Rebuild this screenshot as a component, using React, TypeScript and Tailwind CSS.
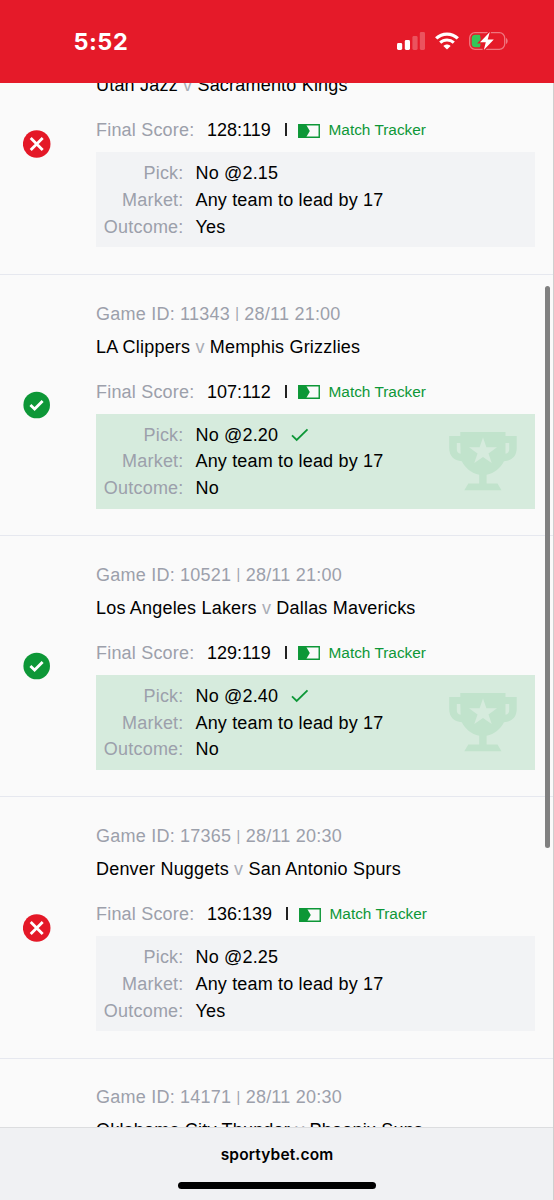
import React from 'react';

type Bet = {
  id?: string;
  time?: string;
  home: string;
  away: string;
  score?: string;
  pick?: string;
  outcome?: string;
  won: boolean;
  scoreWidth: string;
};

const bets: Bet[] = [
  { home: 'Utah Jazz', away: 'Sacramento Kings', score: '128:119', pick: 'No @2.15', outcome: 'Yes', won: false, scoreWidth: 'w-[78px]' },
  { id: '11343', time: '28/11 21:00', home: 'LA Clippers', away: 'Memphis Grizzlies', score: '107:112', pick: 'No @2.20', outcome: 'No', won: true, scoreWidth: 'w-[78px]' },
  { id: '10521', time: '28/11 21:00', home: 'Los Angeles Lakers', away: 'Dallas Mavericks', score: '129:119', pick: 'No @2.40', outcome: 'No', won: true, scoreWidth: 'w-[78px]' },
  { id: '17365', time: '28/11 20:30', home: 'Denver Nuggets', away: 'San Antonio Spurs', score: '136:139', pick: 'No @2.25', outcome: 'Yes', won: false, scoreWidth: 'w-[79px]' },
  { id: '14171', time: '28/11 20:30', home: 'Oklahoma City Thunder', away: 'Phoenix Suns', won: false, scoreWidth: 'w-[78px]' },
];

function StatusIcon({ won }: { won: boolean }) {
  return (
    <svg width="28" height="28" viewBox="0 0 28 28" fill="none">
      <circle cx="13.7" cy="14" r={won ? 13.3 : 13.8} fill={won ? '#0d9737' : '#e41827'} />
      {won ? (
        <path d="M7.4 14l4.2 4.1 8-8.2" stroke="#fff" strokeWidth="2.8" />
      ) : (
        <path d="M7.7 8l12 12M19.7 8L7.7 20" stroke="#fff" strokeWidth="2.8" />
      )}
    </svg>
  );
}

function Trophy() {
  return (
    <svg width="68" height="59" viewBox="0 0 68 59" fill="#c1e3cc">
      <path
        fillRule="evenodd"
        d="M11.3 0H56.5V4H67.7V16C67.7 24 63 28.8 55 29.2C51.5 36 45.5 41 37.6 42.8V51.5H48.5L52.5 58.3H15.3L19.3 51.5H30.2V42.8C22.3 41 16.3 36 12.8 29.2C5 28.8 .2 24 .2 16V4H11.3ZM11.3 11H7.8V17C7.8 20 9 21.3 11.6 21.8ZM56.5 11V21.8C59 21.3 60.2 20 60.2 17V11Z"
      />
      <path fill="#d6ebdd" d="M34 5.5L37.4 15.3H48L39.5 21.4L42.7 31L34 25L25.3 31L28.5 21.4L20 15.3H30.6Z" />
    </svg>
  );
}

function Row({ label, children }: { label: string; children: React.ReactNode }) {
  return (
    <div className="flex h-[26.8px] items-center gap-[12px]">
      <span className="w-[87.5px] text-right tracking-[0.2px] text-[#9ca0ab]">{label}</span>
      <span className="flex items-center tracking-[0.17px]">{children}</span>
    </div>
  );
}

function BetItem({ bet }: { bet: Bet }) {
  return (
    <article className="flex h-[261.25px] shrink-0 border-b-[1.5px] border-[#e6e8ef] pr-[19px]">
      <div className="w-[96px] shrink-0 pl-[23px] pt-[116.3px]">{bet.score && <StatusIcon won={bet.won} />}</div>
      <div className="min-w-0 flex-1 whitespace-nowrap pt-[24.85px] text-[18px]">
        <div className="h-[28px] leading-[28px] tracking-[0.23px] text-[#9ca0ab]">
          {bet.id && (
            <>
              Game ID: {bet.id} <span className="relative -top-[1.5px] text-[14px]">|</span> {bet.time}
            </>
          )}
        </div>
        <div className="mt-[5px] h-[28px] leading-[28px] tracking-[0.2px] text-black">
          {bet.home} <span className="text-[#a9adb6]">v</span> {bet.away}
        </div>
        {bet.score && (
          <>
            <div className="mt-[17px] flex h-[28px] items-center leading-[28px]">
              <span className="w-[111px] tracking-[0.2px] text-[#9ca0ab]">Final Score:</span>
              <span className={`${bet.scoreWidth} text-black`}>{bet.score}</span>
              <span className="-mt-px h-[13px] w-[1.5px] bg-[#222]" />
              <svg className="ml-[11px] mt-[1px]" width="22" height="14" viewBox="0 0 22 14" fill="none">
                <path d="M.75.75H21.25V13.25H.75Z" stroke="#0d9737" strokeWidth="1.4" />
                <path d="M.5.5H8L11.8 7L8 13.5H.5Z" fill="#0d9737" />
              </svg>
              <span className="ml-[9px] text-[15.4px] text-[#0d9737]">Match Tracker</span>
            </div>
            <div className={`mt-[8.15px] flex h-[95px] justify-between pt-[8px] ${bet.won ? 'bg-[#d6ebdd]' : 'bg-[#f2f3f5]'}`}>
              <div className="text-black">
                <Row label="Pick:">
                  {bet.pick}
                  {bet.won && (
                    <svg className="ml-[13px] -mt-[1px]" width="18" height="14" viewBox="0 0 18 14" fill="none">
                      <path d="M1 7.3L5.7 12L16.5 1.3" stroke="#0d9737" strokeWidth="1.8" />
                    </svg>
                  )}
                </Row>
                <Row label="Market:">Any team to lead by 17</Row>
                <Row label="Outcome:">{bet.outcome}</Row>
              </div>
              {bet.won && (
                <div className="pr-[18px] pt-[10px]">
                  <Trophy />
                </div>
              )}
            </div>
          </>
        )}
      </div>
    </article>
  );
}

function StatusBar() {
  return (
    <header className="flex h-[83px] shrink-0 justify-between bg-[#e51a29] pl-[73.5px] pr-[46px] text-white">
      <time className="pt-[25.5px] font-[Inter] text-[23.5px] font-bold leading-[32px] tracking-[0.5px]">5:52</time>
      <div className="flex items-start pt-[32px]">
        <svg width="28" height="18" viewBox="0 0 28 18" fill="#fff">
          <rect x="0" y="11" width="5.2" height="7" rx="1.4" />
          <rect x="7.8" y="8" width="5.2" height="10" rx="1.4" />
          <rect x="15.4" y="4" width="5.2" height="14" rx="1.4" opacity=".25" />
          <rect x="22.8" y="0" width="5.2" height="18" rx="1.4" opacity=".25" />
        </svg>
        <svg className="ml-[10px]" width="24" height="18" viewBox="0 0 24 18" fill="none" stroke="#fff">
          <path d="M1.2 6.4C7.2.6 16.8.6 22.8 6.4" strokeWidth="3.3" />
          <path d="M5.2 10.6C9 7 15 7 18.8 10.6" strokeWidth="3" />
          <path d="M8.4 13.9C10.4 11.9 13.6 11.9 15.6 13.9L12 17.6Z" fill="#fff" stroke="none" />
        </svg>
        <svg className="ml-[10px]" width="39" height="18" viewBox="0 0 39 18" fill="none">
          <rect x=".7" y=".7" width="35" height="16.6" rx="5.3" stroke="#fff" strokeOpacity=".4" strokeWidth="1.3" />
          <path d="M37.2 6V12C39 11 39 7 37.2 6Z" fill="#fff" opacity=".5" />
          <path d="M6 2.7H10.5C12 2.7 12 15.3 10.5 15.3H6C3.8 15.3 2.7 13.8 2.7 12V6C2.7 4.2 3.8 2.7 6 2.7Z" fill="#34c759" />
          <path d="M20.8 0L11 10.2H16.8L14.8 18L24.8 7.6H18.7Z" fill="#fff" stroke="#e51a29" strokeWidth="2.5" paintOrder="stroke" />
        </svg>
      </div>
    </header>
  );
}

export default function App() {
  return (
    <div className="relative flex h-[1200px] w-[554px] flex-col overflow-hidden bg-[#fafafa] font-['Liberation_Sans',Arial,sans-serif]">
      <StatusBar />
      <main className="min-h-0 flex-1 overflow-hidden">
        <div className="-mt-[69.5px] flex flex-col">
          {bets.map((bet) => (
            <BetItem key={bet.home} bet={bet} />
          ))}
        </div>
      </main>
      <footer className="flex h-[73.5px] shrink-0 flex-col items-center border-t-[1.5px] border-[#dcdddf] bg-[#f0f1f3] pt-[14px]">
        <span className="font-[Inter] text-[15.5px] font-semibold leading-[26px] tracking-[0.15px] text-black">sportybet.com</span>
        <span className="mt-[14.5px] h-[7px] w-[198px] rounded-full bg-black" />
      </footer>
      <div className="absolute right-[4px] top-[286px] h-[562px] w-[5px] rounded-full bg-[#808080]" />
      <div className="absolute right-0 top-[83px] h-[1117px] w-px bg-[#cfcfcf]" />
    </div>
  );
}
